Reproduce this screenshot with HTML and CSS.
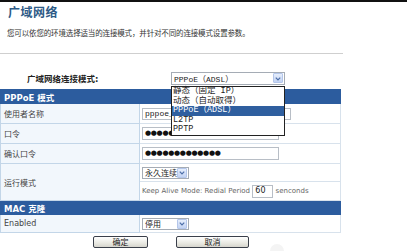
FILE: index.html
```html
<!DOCTYPE html>
<html lang="en">
<head>
    <meta charset="UTF-8">
    <title>广域网络</title>
    <link rel="stylesheet" href="styles.css">
</head>
<body>
    <div class="topline"></div>
    <h1 class="title">广域网络</h1>
    <p class="desc">您可以依您的环境选择适当的连接模式，并针对不同的连接模式设置参数。</p>
    <div class="sep"></div>

    <div class="mode-row">
        <span class="mode-label">广域网络连接模式:</span>
        <div class="select select-mode">
            <span class="select-text">PPPoE（ADSL）</span>
            <span class="arrow"><svg width="9" height="9" viewBox="0 0 9 9"><path d="M2 3.5 L4.5 6 L7 3.5" fill="none" stroke="#4d6fa8" stroke-width="1.4"/></svg></span>
        </div>
    </div>

    <table class="settings">
        <tr><th colspan="2">PPPoE 模式</th></tr>
        <tr>
            <td class="label">使用者名称</td>
            <td class="value"><div class="input input-user">pppoe_user</div></td>
        </tr>
        <tr>
            <td class="label">口令</td>
            <td class="value"><div class="input input-pass">●●●●●●●●●●●●●</div></td>
        </tr>
        <tr>
            <td class="label">确认口令</td>
            <td class="value"><div class="input input-pass">●●●●●●●●●●●●●</div></td>
        </tr>
        <tr class="run-top">
            <td class="label" rowspan="2">运行模式</td>
            <td class="value">
                <div class="select select-small">
                    <span class="select-text">永久连续</span>
                    <span class="arrow"><svg width="9" height="9" viewBox="0 0 9 9"><path d="M2 3.5 L4.5 6 L7 3.5" fill="none" stroke="#4d6fa8" stroke-width="1.4"/></svg></span>
                </div>
            </td>
        </tr>
        <tr class="run-bottom">
            <td class="value keep">Keep Alive Mode: Redial Period <span class="input input-num">60</span> senconds</td>
        </tr>
        <tr><th colspan="2">MAC 克隆</th></tr>
        <tr class="row-enabled">
            <td class="label">Enabled</td>
            <td class="value">
                <div class="select select-small">
                    <span class="select-text">停用</span>
                    <span class="arrow"><svg width="9" height="9" viewBox="0 0 9 9"><path d="M2 3.5 L4.5 6 L7 3.5" fill="none" stroke="#4d6fa8" stroke-width="1.4"/></svg></span>
                </div>
            </td>
        </tr>
    </table>

    <div class="buttons">
        <button class="btn btn-ok">确定</button>
        <button class="btn btn-cancel">取消</button>
    </div>

    <ul class="dropdown">
        <li>静态（固定 IP）</li>
        <li>动态（自动取得）</li>
        <li class="selected">PPPoE（ADSL）</li>
        <li>L2TP</li>
        <li>PPTP</li>
    </ul>

    <div class="watermark"></div>
</body>
</html>
```

FILE: styles.css
```css
body {
    margin: 0;
    background: #fff;
    font-family: "DejaVu Sans", "Noto Sans CJK SC", sans-serif;
    color: #333;
    width: 407px;
    height: 251px;
    overflow: hidden;
    position: relative;
}
.topline {
    height: 2px;
    background: #111;
}
.title {
    margin: 3px 0 0 8px;
    font-size: 12px;
    line-height: 16px;
    font-weight: bold;
    color: #2d5a86;
    letter-spacing: 0.5px;
}
.desc {
    margin: 7px 0 0 7px;
    font-size: 7.5px;
    line-height: 12px;
    color: #333;
    letter-spacing: -0.15px;
}
.sep {
    margin-top: 13px;
    width: 343px;
    height: 1px;
    background: #cfcfcf;
}
.mode-row {
    display: flex;
    align-items: center;
    margin-top: 17px;
    height: 14px;
}
.mode-label {
    margin-left: 27px;
    width: 144px;
    font-size: 8.5px;
    font-weight: bold;
    color: #222;
}
.select {
    display: flex;
    align-items: center;
    justify-content: space-between;
    background: #fff;
    border: 1px solid #a5acb5;
    box-sizing: border-box;
    font-family: "Liberation Mono", "Noto Sans CJK SC", monospace;
    font-size: 8px;
    color: #222;
}
.select-text {
    padding-left: 2px;
}
.arrow {
    display: flex;
    align-items: center;
    justify-content: center;
    width: 10px;
    height: 10px;
    margin-right: 1px;
    background: linear-gradient(#e6eefc, #c3d3f3);
    border: 1px solid #b4c6ea;
    border-radius: 1px;
    box-sizing: border-box;
}
.select-mode {
    width: 114px;
    height: 13px;
}
.settings {
    margin-top: 4px;
    width: 341px;
    border-collapse: collapse;
    font-size: 8px;
}
.settings th {
    background: #2c5c9e;
    color: #fff;
    text-align: left;
    font-weight: bold;
    font-size: 8.5px;
    height: 13px;
    padding: 0 0 0 3px;
    border: 1px solid #2c5c9e;
}
.settings td {
    padding: 0;
    height: 19px;
    border: 1px solid #d8e2ec;
}
.settings .label {
    width: 135px;
    padding-left: 3px;
    background: #f2f7fc;
    border-color: #c3d6e8;
    color: #444;
}
.settings .value {
    padding-left: 2px;
}
.input {
    box-sizing: border-box;
    height: 12px;
    border: 1px solid #b8bec6;
    background: #fff;
    font-size: 8px;
    line-height: 10px;
    padding-left: 2px;
    color: #222;
}
.input-user {
    width: 149px;
    font-family: "Liberation Mono", monospace;
}
.input-pass {
    width: 137px;
    height: 13px;
    font-size: 7px;
    letter-spacing: -0.3px;
    color: #111;
}
.select-small {
    width: 47px;
    height: 12px;
    font-family: "Noto Sans CJK SC", sans-serif;
}
.run-top td.value {
    height: 17px;
}
.run-bottom td {
    height: 18px;
}
.keep {
    font-size: 7px;
    color: #666;
    white-space: nowrap;
}
.input-num {
    display: inline-block;
    width: 21px;
    height: 13px;
    vertical-align: middle;
    font-size: 8px;
    color: #222;
    font-family: "DejaVu Sans", sans-serif;
}
.row-enabled td {
    height: 17px;
}
.buttons {
    display: flex;
    margin-top: 3px;
    padding-left: 93px;
    gap: 28px;
}
.btn {
    height: 12px;
    padding: 0;
    border: 1px solid #3a3f4a;
    border-radius: 2px;
    background: linear-gradient(#ffffff, #e9e9e2 60%, #d6d5cd);
    font-family: "Noto Sans CJK SC", sans-serif;
    font-size: 8px;
    line-height: 10px;
    color: #222;
}
.btn-ok {
    width: 55px;
}
.btn-cancel {
    width: 73px;
}
.dropdown {
    position: absolute;
    left: 171px;
    top: 86px;
    width: 114px;
    margin: 0;
    padding: 0;
    list-style: none;
    background: #fff;
    border: 1px solid #222;
    box-sizing: border-box;
    font-family: "Liberation Mono", "Noto Sans CJK SC", monospace;
    font-size: 8.5px;
    line-height: 9.6px;
    color: #222;
}
.dropdown li {
    padding-left: 1px;
}
.dropdown .selected {
    background: #2f5f9f;
    color: #fff;
}
.watermark {
    position: absolute;
    left: 270px;
    top: 244px;
    width: 14px;
    height: 14px;
    border-radius: 50%;
    background: #f4f4f4;
}
```
